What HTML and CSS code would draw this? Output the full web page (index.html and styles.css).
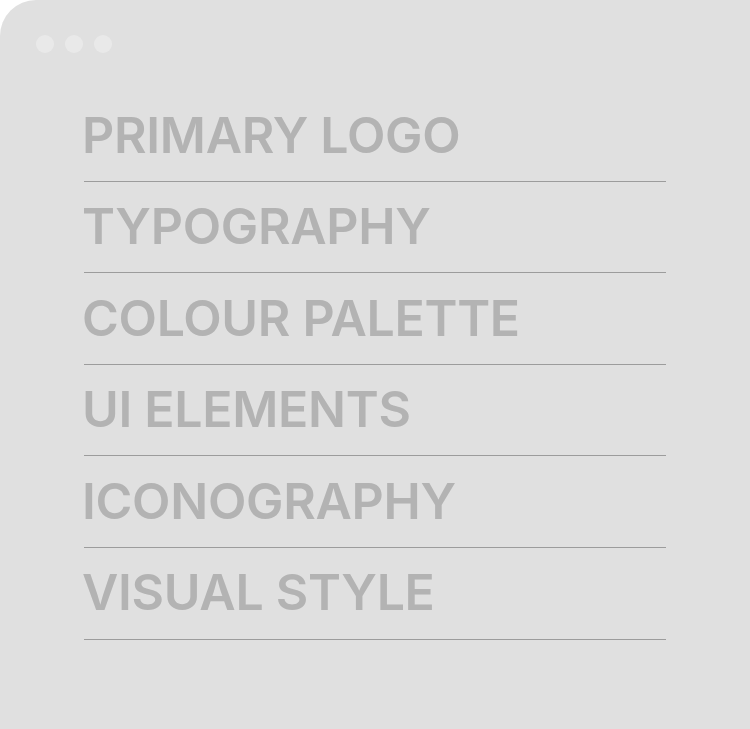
FILE: index.html
```html
<!DOCTYPE html>
<html lang="en">
<head>
<meta charset="utf-8">
<title>Brand guidelines</title>
<link rel="stylesheet" href="styles.css">
</head>
<body>
<div class="window">
  <div class="dots">
    <span class="dot"></span>
    <span class="dot"></span>
    <span class="dot"></span>
  </div>
  <ul class="menu">
    <li class="item">PRIMARY LOGO</li>
    <li class="item">TYPOGRAPHY</li>
    <li class="item">COLOUR PALETTE</li>
    <li class="item">UI ELEMENTS</li>
    <li class="item">ICONOGRAPHY</li>
    <li class="item">VISUAL STYLE</li>
  </ul>
</div>
</body>
</html>
```

FILE: styles.css
```css
html, body {
  margin: 0;
  padding: 0;
  background: #ffffff;
}

.window {
  width: 750px;
  height: 729px;
  box-sizing: border-box;
  background: #e0e0e0;
  border-top-left-radius: 36px;
  padding: 35px 0 0 36px;
  font-family: Inter, "Noto Sans", sans-serif;
}

.dots {
  display: flex;
  gap: 11px;
}

.dot {
  width: 18px;
  height: 18px;
  border-radius: 50%;
  background: #e9e9e9;
}

.menu {
  list-style: none;
  margin: 0 0 0 48px;
  padding: 37px 0 0 0;
  width: 582px;
}

.item {
  font-size: 50px;
  line-height: 50px;
  font-weight: 600;
  letter-spacing: -0.3px;
  color: #b3b3b3;
  padding: 19.5px 0 21.1px 0;
  border-bottom: 1px solid #9c9c9c;
  text-indent: -2px;
}
```
